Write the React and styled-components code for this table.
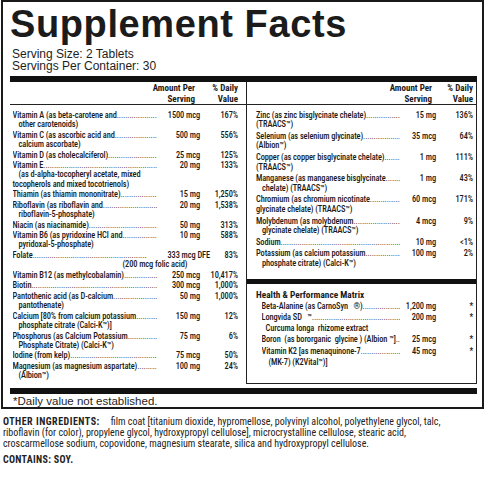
import styled, { createGlobalStyle } from "styled-components"

const NARROW = `Roboto, "Roboto Condensed", "DejaVu Sans Condensed", sans-serif`

const GlobalStyle = createGlobalStyle`
  html, body {
    margin: 0;
    padding: 0;
    background: #fff;
  }
  body {
    font-family: "Liberation Sans", Arial, sans-serif;
    color: #1e1e1e;
  }
`

const Page = styled.div`
  padding-left: 1px;
`

const Label = styled.section`
  width: 483px;
  box-sizing: border-box;
  border: 2px solid #1a1a1a;
  padding: 2px 5px 0 7px;
`

const Title = styled.h1`
  margin: 0;
  font: bold 38px/40px "Liberation Sans", Arial, sans-serif;
  letter-spacing: 0.6px;
  color: #1b1b1b;
`

const Serving = styled.div`
  margin-top: 3.5px;
  font-size: 12px;
  line-height: 12.3px;
  padding-left: 2px;
`

const Panels = styled.div`
  display: grid;
  grid-template-columns: 236px 1fr;
  margin-top: 4px;
  border-top: 6px solid #111;
`

const Panel = styled.div`
  font-family: ${NARROW};
  font-stretch: 75%;
  color: #1a1a1a;
  ${({ $boxed }) => $boxed && "border: 1px solid #222; border-top: none;"}
`

const Head = styled.div`
  display: grid;
  grid-template-columns: ${({ $cols }) => $cols};
  padding: 1px ${({ $pr }) => $pr}px 0 ${({ $pl }) => $pl}px;
  border-bottom: 1px solid #222;
  font-size: 9px;
  font-weight: bold;
  line-height: 10.5px;
`

const HeadCell = styled.div`
  grid-column: ${({ $col }) => $col};
  justify-self: end;
  text-align: right;
  white-space: nowrap;
  padding-right: ${({ $pr }) => $pr || 0}px;
`

const Body = styled.div`
  padding: ${({ $pt }) => $pt}px ${({ $pr }) => $pr}px ${({ $pb }) => $pb || 0}px ${({ $pl }) => $pl}px;
`

const Row = styled.div`
  display: grid;
  grid-template-columns: ${({ $cols }) => $cols};
  padding-bottom: ${({ $gap }) => $gap}px;
  font-size: 8.4px;
  font-weight: 500;
  letter-spacing: -0.1px;
  line-height: ${({ $lh }) => $lh}px;
`

const Name = styled.div`
  display: flex;
  min-width: 0;
  white-space: nowrap;
  overflow: hidden;
`

const Dots = styled.span`
  flex: 1;
  min-width: 0;
  overflow: hidden;
  margin-right: ${({ $trim }) => $trim || 0}px;
  font-weight: 400;
  &::after {
    content: "....................................................................................................................";
  }
`

const Amount = styled.div`
  justify-self: end;
  white-space: nowrap;
  margin-right: ${({ $overhang }) => -($overhang || 0)}px;
`

const Dv = styled.div`
  justify-self: end;
  white-space: nowrap;
`

const More = styled.div`
  grid-column: 1 / -1;
  padding-left: ${({ $indent }) => $indent}px;
  white-space: nowrap;
`

const Bar = styled.div`
  border-top: ${({ $h }) => $h}px solid #111;
  margin-top: ${({ $mt }) => $mt}px;
`

const Section = styled.div`
  padding: 6px 0 0 9px;
  font-size: 9.3px;
  font-weight: bold;
  line-height: 10px;
`

const Footnote = styled.div`
  margin-top: 4px;
  border-top: 6px solid #111;
  padding: 1.5px 0 0 3px;
  font-size: 11.5px;
  line-height: 12px;
`

const Ingredients = styled.div`
  padding: 7px 0 0 2px;
  font-family: ${NARROW};
  font-stretch: 75%;
  font-size: 10px;
  line-height: 11px;
  color: #222;
`

const Strong = styled.b`
  letter-spacing: ${({ $ls }) => $ls || 0}px;
  margin-right: ${({ $mr }) => $mr || 0}px;
`

const Contains = styled.div`
  margin-top: 5px;
  font-weight: bold;
  letter-spacing: 0.3px;
`

const LEFT = [
  { name: "Vitamin A (as beta-carotene and", amount: "1500 mcg", dv: "167%", more: [["other carotenoids)", 6]] },
  { name: "Vitamin C (as ascorbic acid and", amount: "500 mg", dv: "556%", more: [["calcium ascorbate)", 6]] },
  { name: "Vitamin D (as cholecalciferol)", amount: "25 mcg", dv: "125%" },
  { name: "Vitamin E", amount: "20 mg", dv: "133%", more: [["(as d-alpha-tocopheryl acetate, mixed", 6], ["tocopherols and mixed tocotrienols)", 0]] },
  { name: "Thiamin (as thiamin mononitrate)", amount: "15 mg", dv: "1,250%" },
  { name: "Riboflavin (as riboflavin and", amount: "20 mg", dv: "1,538%", more: [["riboflavin-5-phosphate)", 6]] },
  { name: "Niacin (as niacinamide)", amount: "50 mg", dv: "313%" },
  { name: "Vitamin B6 (as pyridoxine HCl and", amount: "10 mg", dv: "588%", more: [["pyridoxal-5-phosphate)", 6]] },
  { name: "Folate", amount: "333 mcg DFE", dv: "83%", trim: 10, overhang: 10, more: [["(200 mcg folic acid)", 110]] },
  { name: "Vitamin B12 (as methylcobalamin)", amount: "250 mcg", dv: "10,417%" },
  { name: "Biotin", amount: "300 mcg", dv: "1,000%" },
  { name: "Pantothenic acid (as D-calcium", amount: "50 mg", dv: "1,000%", more: [["pantothenate)", 6]] },
  { name: "Calcium [80% from calcium potassium", amount: "150 mg", dv: "12%", more: [["phosphate citrate (Calci-K™)]", 6]] },
  { name: "Phosphorus (as Calcium Potassium", amount: "75 mg", dv: "6%", more: [["Phosphate Citrate) (Calci-K™)", 6]] },
  { name: "Iodine (from kelp)", amount: "75 mcg", dv: "50%" },
  { name: "Magnesium (as magnesium aspartate)", amount: "100 mg", dv: "24%", more: [["(Albion™)", 6]] },
]

const RIGHT = [
  { name: "Zinc (as zinc bisglycinate chelate)", amount: "15 mg", dv: "136%", more: [["(TRAACS™)", 0]] },
  { name: "Selenium (as selenium glycinate)", amount: "35 mcg", dv: "64%", more: [["(Albion™)", 0]] },
  { name: "Copper (as copper bisglycinate chelate)", amount: "1 mg", dv: "111%", more: [["(TRAACS™)", 0]] },
  { name: "Manganese (as manganese bisglycinate", amount: "1 mg", dv: "43%", more: [["chelate) (TRAACS™)", 6]] },
  { name: "Chromium (as chromium nicotinate", amount: "60 mcg", dv: "171%", more: [["glycinate chelate) (TRAACS™)", 0]] },
  { name: "Molybdenum (as molybdenum", amount: "4 mcg", dv: "9%", more: [["glycinate chelate) (TRAACS™)", 6]] },
  { name: "Sodium", amount: "10 mg", dv: "<1%" },
  { name: "Potassium (as calcium potassium", amount: "100 mg", dv: "2%", more: [["phosphate citrate) (Calci-K™)", 6]] },
]

const HEALTH = [
  { name: "Beta-Alanine (as CarnoSyn\u00a0\u00a0\u00a0®)", amount: "1,200 mg", dv: "*" },
  { name: "Longvida SD\u00a0\u00a0\u00a0™", amount: "200 mg", dv: "*", more: [["Curcuma longa\u00a0\u00a0rhizome extract", 4]] },
  { name: "Boron\u00a0\u00a0(as bororganic\u00a0\u00a0glycine\u00a0) (Albion\u00a0™]", amount: "25 mcg", dv: "*" },
  { name: "Vitamin K2 [as menaquinone-7", amount: "45 mcg", dv: "*", more: [["(MK-7) (K2Vital™)]", 7]] },
]

const LEFT_COLS = "1fr 43px 38px"
const RIGHT_COLS = "1fr 36px 37px"

function Nutrient({ item, cols, gap, lh }) {
  return (
    <Row $cols={cols} $gap={gap} $lh={lh}>
      <Name>
        {item.name}
        <Dots $trim={item.trim} />
      </Name>
      <Amount $overhang={item.overhang}>{item.amount}</Amount>
      <Dv>{item.dv}</Dv>
      {(item.more || []).map(([text, indent]) => (
        <More key={text} $indent={indent}>
          {text}
        </More>
      ))}
    </Row>
  )
}

function ColumnHead({ cols, pl, pr, amountPr }) {
  return (
    <Head $cols={cols} $pl={pl} $pr={pr}>
      <HeadCell $col={2} $pr={amountPr}>
        Amount Per
        <br />
        Serving
      </HeadCell>
      <HeadCell $col={3}>
        % Daily
        <br />
        Value
      </HeadCell>
    </Head>
  )
}

export default function App() {
  return (
    <Page>
      <GlobalStyle />
      <Label>
        <Title>Supplement Facts</Title>
        <Serving>
          Serving Size: 2 Tablets
          <br />
          Servings Per Container: 30
        </Serving>

        <Panels>
          <Panel>
            <ColumnHead cols={LEFT_COLS} pl={2.5} pr={8} amountPr={5} />
            <Body $pt={6} $pl={2.5} $pr={8}>
              {LEFT.map((item) => (
                <Nutrient key={item.name} item={item} cols={LEFT_COLS} gap={1.4} lh={9.2} />
              ))}
            </Body>
          </Panel>

          <Panel $boxed>
            <ColumnHead cols={RIGHT_COLS} pl={9} pr={3} amountPr={4} />
            <Body $pt={6} $pl={9} $pr={3}>
              {RIGHT.map((item) => (
                <Nutrient key={item.name} item={item} cols={RIGHT_COLS} gap={2.5} lh={9.3} />
              ))}
            </Body>
            <Bar $h={5} $mt={8.5} />
            <Section>Health &amp; Performance Matrix</Section>
            <Body $pt={0.5} $pl={14.5} $pr={3} $pb={14.5}>
              {HEALTH.map((item) => (
                <Nutrient key={item.name} item={item} cols={RIGHT_COLS} gap={1.5} lh={10.3} />
              ))}
            </Body>
          </Panel>
        </Panels>

        <Footnote>*Daily value not established.</Footnote>
      </Label>

      <Ingredients>
        <Strong $ls={0.5} $mr={11}>OTHER INGREDIENTS:</Strong>
        film coat [titanium dioxide, hypromellose, polyvinyl alcohol, polyethylene glycol, talc,
        <br />
        riboflavin (for color), propylene glycol, hydroxypropyl cellulose], microcrystalline cellulose, stearic acid,
        <br />
        croscarmellose sodium, copovidone, magnesium stearate, silica and hydroxypropyl cellulose.
        <Contains>CONTAINS: SOY.</Contains>
      </Ingredients>
    </Page>
  )
}
